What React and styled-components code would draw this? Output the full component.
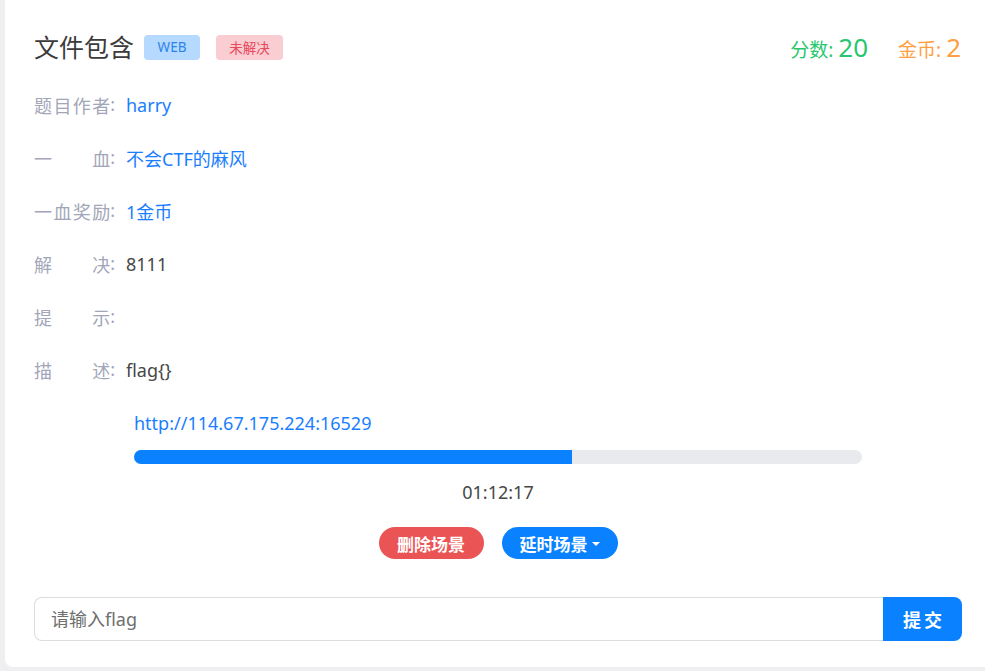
import React from "react";
import styled, { createGlobalStyle } from "styled-components";

const Global = createGlobalStyle`
  html, body { margin: 0; padding: 0; background: #efeff1; overflow: hidden; }
  body { font-family: "Noto Sans", "Noto Sans CJK SC", sans-serif; }
  * { box-sizing: border-box; }
`;

const Card = styled.div`
  margin-left: 5px;
  width: 990px;
  height: 667px;
  background: #fff;
  border-radius: 0 0 8px 8px;
  padding: 22px 33px 26px 29px;
`;

const Inner = styled.div`
  width: 928px;
  display: flex;
  flex-direction: column;
`;

const Header = styled.div`
  height: 50px;
  display: flex;
  align-items: center;
  justify-content: space-between;
  margin-bottom: 6px;
`;

const TitleWrap = styled.div`
  display: flex;
  align-items: center;
`;

const Title = styled.h1`
  margin: 0 10px 0 0;
  font-size: 25px;
  font-weight: 400;
  color: #3b3b3b;
  line-height: 30px;
`;

const Tag = styled.span`
  display: inline-flex;
  align-items: center;
  justify-content: center;
  height: 25px;
  width: ${(p) => p.$w}px;
  margin-right: 16px;
  border-radius: 4px;
  font-size: 13.5px;
  background: ${(p) => p.$bg};
  color: ${(p) => p.$fg};
`;

const Stats = styled.div`
  display: flex;
  align-items: baseline;
  gap: 30px;
  margin-right: 1px;
`;

const Stat = styled.span`
  color: ${(p) => p.$c};
  font-size: 19px;
  & b {
    font-weight: 400;
    font-size: 26px;
  }
`;

const Row = styled.div`
  height: 53px;
  display: flex;
  align-items: center;
  font-size: 18px;
`;

const Label = styled.span`
  display: flex;
  width: 81px;
  margin-right: 11px;
  color: #a2a6b8;
`;

const LabelText = styled.span`
  flex: 1;
  text-align: justify;
  text-align-last: justify;
`;

const Value = styled.span`
  color: ${(p) => (p.$link ? "#1a7eff" : "#474747")};
`;

const Env = styled.div`
  width: 728px;
  align-self: center;
  display: flex;
  flex-direction: column;
  margin-top: 14px;
`;

const Url = styled.a`
  color: #1a7eff;
  font-size: 18px;
  line-height: 26px;
  text-decoration: none;
`;

const Track = styled.div`
  margin-top: 14px;
  height: 14px;
  border-radius: 7px;
  background: #e9eaee;
  overflow: hidden;
`;

const Fill = styled.div`
  height: 100%;
  background: #0a82ff;
`;

const Time = styled.div`
  margin-top: 15px;
  text-align: center;
  font-size: 18px;
  line-height: 26px;
  color: #474747;
`;

const Buttons = styled.div`
  margin-top: 22px;
  display: flex;
  justify-content: center;
  gap: 18px;
`;

const Pill = styled.button`
  height: 32px;
  width: ${(p) => p.$w}px;
  border: none;
  border-radius: 16px;
  background: ${(p) => p.$bg};
  color: #fff;
  font-family: inherit;
  font-size: 17px;
  font-weight: 700;
  display: inline-flex;
  align-items: center;
  justify-content: center;
  gap: 4px;
  padding: 0;
`;

const Caret = styled.span`
  width: 0;
  height: 0;
  border-left: 4px solid transparent;
  border-right: 4px solid transparent;
  border-top: 4px solid #fff;
  margin-top: 2px;
`;

const Form = styled.div`
  margin-top: 38px;
  display: flex;
  height: 44px;
`;

const Input = styled.input`
  flex: 1;
  height: 100%;
  border: 1px solid #dcdde1;
  border-right: none;
  border-radius: 8px 0 0 8px;
  padding: 0 16px;
  font-family: inherit;
  font-size: 18px;
  color: #474747;
  outline: none;
  &::placeholder { color: #6f6f6f; }
`;

const Submit = styled.button`
  width: 79px;
  height: 100%;
  border: none;
  border-radius: 0 8px 8px 0;
  background: #0a82ff;
  color: #fff;
  font-family: inherit;
  font-size: 18px;
  font-weight: 700;
  letter-spacing: 3px;
  padding: 0 0 0 3px;
`;

const rows = [
  ["题目作者", "harry", true],
  ["一血", "不会CTF的麻风", true],
  ["一血奖励", "1金币", true],
  ["解决", "8111", false],
  ["提示", "", false],
  ["描述", "flag{}", false],
];

export default function App() {
  return (
    <>
      <Global />
      <Card>
        <Inner>
          <Header>
            <TitleWrap>
              <Title>文件包含</Title>
              <Tag $w={56} $bg="#b6d9ff" $fg="#2a84ee">WEB</Tag>
              <Tag $w={67} $bg="#f9cdd1" $fg="#e8485b">未解决</Tag>
            </TitleWrap>
            <Stats>
              <Stat $c="#28c76f">分数: <b>20</b></Stat>
              <Stat $c="#ff9f43">金币: <b>2</b></Stat>
            </Stats>
          </Header>
          {rows.map(([l, v, link]) => (
            <Row key={l}>
              <Label>
                <LabelText>{l}</LabelText>:
              </Label>
              <Value $link={link}>{v}</Value>
            </Row>
          ))}
          <Env>
            <Url href="#">http://114.67.175.224:16529</Url>
            <Track>
              <Fill style={{ width: "60.2%" }} />
            </Track>
            <Time>01:12:17</Time>
            <Buttons>
              <Pill $w={105} $bg="#ea5455">删除场景</Pill>
              <Pill $w={116} $bg="#0a82ff">延时场景<Caret /></Pill>
            </Buttons>
          </Env>
          <Form>
            <Input placeholder="请输入flag" />
            <Submit>提交</Submit>
          </Form>
        </Inner>
      </Card>
    </>
  );
}
